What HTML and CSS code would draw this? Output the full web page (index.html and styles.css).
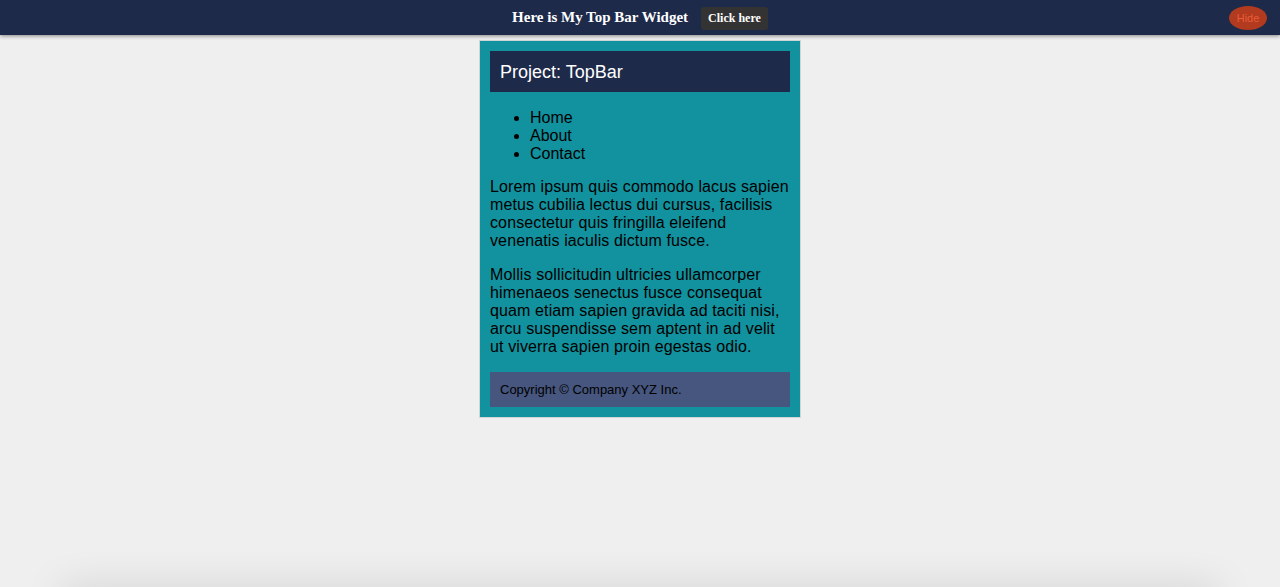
FILE: index.html
```html
<!DOCTYPE html>
<html>
<head>
<meta charset="utf-8">
<link rel="stylesheet" href="styles.css">
</head>
<body>
<div class="topbar">
  <div class="topbar-center">
    <span class="topbar-title">Here is My Top Bar Widget</span>
    <button class="topbar-btn">Click here</button>
  </div>
  <button class="hide-btn">Hide</button>
</div>
<div class="page">
  <div class="container">
    <div class="header">Project: TopBar</div>
    <ul class="nav">
      <li>Home</li>
      <li>About</li>
      <li>Contact</li>
    </ul>
    <p class="text">Lorem ipsum quis commodo lacus sapien metus cubilia lectus dui cursus, facilisis consectetur quis fringilla eleifend venenatis iaculis dictum fusce.</p>
    <p class="text">Mollis sollicitudin ultricies ullamcorper himenaeos senectus fusce consequat quam etiam sapien gravida ad taciti nisi, arcu suspendisse sem aptent in ad velit ut viverra sapien proin egestas odio.</p>
    <div class="footer">Copyright © Company XYZ Inc.</div>
  </div>
</div>
<div class="bottom-shade"></div>
</body>
</html>
```
FILE: styles.css
```css
html, body {
  margin: 0;
  padding: 0;
  height: 100%;
}
body {
  background: #efefef;
  font-family: "Liberation Sans", Arial, sans-serif;
  overflow: hidden;
}
.topbar {
  height: 35px;
  background: #1e2a4a;
  box-shadow: 0 1px 4px rgba(0,0,0,0.45);
  display: flex;
  align-items: center;
  justify-content: center;
  position: relative;
  z-index: 2;
}
.topbar-center {
  display: flex;
  align-items: center;
  gap: 13px;
}
.topbar-title {
  font-family: "Liberation Serif", "Times New Roman", serif;
  font-size: 15px;
  font-weight: bold;
  color: #ffffff;
}
.topbar-btn {
  font-family: "Liberation Serif", "Times New Roman", serif;
  font-size: 12px;
  font-weight: bold;
  color: #ffffff;
  background: #333333;
  border: none;
  border-radius: 3px;
  padding: 0 7px;
  height: 23px;
  margin-top: 1px;
}
.hide-btn {
  position: absolute;
  right: 13px;
  top: 6px;
  width: 38px;
  height: 24px;
  border: none;
  border-radius: 50%;
  background: #b23a1e;
  color: #e95a3a;
  font-family: "Liberation Sans", Arial, sans-serif;
  font-size: 11px;
  padding: 0;
}
.page {
  display: flex;
  justify-content: center;
  padding-top: 5px;
}
.container {
  width: 300px;
  padding: 10px;
  background: #12919e;
  border: 1px solid #cfd6d8;
}
.header {
  background: #1e2a4a;
  color: #ffffff;
  font-size: 18px;
  height: 41px;
  line-height: 42px;
  padding: 0 10px;
}
.nav {
  margin: 16px 0 16px 0;
  padding-left: 40px;
  font-size: 16px;
  line-height: 18px;
  color: #000;
  padding-top: 1px;
}
.text {
  margin: 0 0 16px 0;
  font-size: 16px;
  line-height: 18px;
  color: #000;
  letter-spacing: 0.12px;
}
.nav + .text {
  margin-top: -1px;
}
.footer {
  background: #46567e;
  color: #000;
  font-size: 13px;
  height: 35px;
  line-height: 35px;
  padding: 0 10px;
}
.bottom-shade {
  position: fixed;
  left: 60px;
  right: 60px;
  bottom: -30px;
  height: 30px;
  box-shadow: 0 0 40px rgba(0,0,0,0.12);
}
```
